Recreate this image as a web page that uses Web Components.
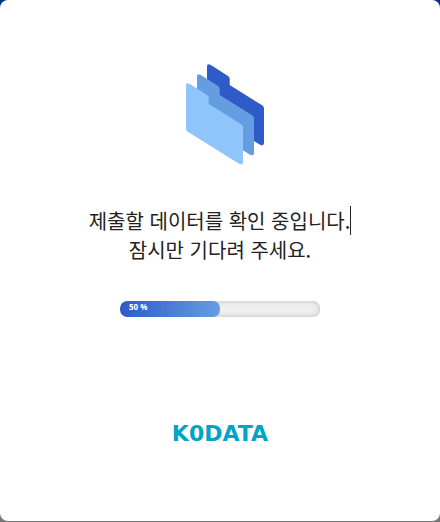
<!DOCTYPE html>
<html lang="ko">
<head>
<meta charset="utf-8">
<meta name="viewport" content="width=device-width">
<title>KODATA</title>
<style>
html, body { height: 100%; }
body {
  margin: 0;
  background: linear-gradient(#003080 50%, #777 50%);
  font-family: "Noto Sans CJK KR", "Noto Sans", sans-serif;
  color: #222;
}
</style>
</head>
<body>
<loading-card>
  <folder-stack slot="art"></folder-stack>
  <typed-message>제출할 데이터를 확인 중입니다.<span slot="next">잠시만 기다려 주세요.</span></typed-message>
  <progress-meter value="50"></progress-meter>
  <brand-mark slot="brand">K0DATA</brand-mark>
</loading-card>
<script>
const define = (name, html, setup) => {
  const template = document.createElement('template');
  template.innerHTML = html;
  customElements.define(name, class extends HTMLElement {
    constructor() {
      super();
      this.attachShadow({ mode: 'open' }).append(template.content.cloneNode(true));
    }
    connectedCallback() { if (setup) setup(this); }
  });
};

define('loading-card', `
<style>
:host { display: block; box-sizing: border-box; height: 100%; padding-bottom: 1px; }
main { box-sizing: border-box; min-height: 100%; display: flex; flex-direction: column; align-items: center;
  padding: 64px 16px 75px; background: #fff; border-radius: 8px; }
section { display: flex; flex-direction: column; align-items: center; gap: 37px; margin-top: 41px; }
footer { margin-top: auto; }
</style>
<main><slot name="art"></slot><section><slot></slot></section><footer><slot name="brand"></slot></footer></main>`);

define('folder-stack', `
<style>:host { display: block; padding-left: 12px; } svg { display: block; }</style>
<svg width="80" height="101" viewBox="0 0 80 101" aria-hidden="true">
  <defs><path id="f" d="M0 2.5Q0-1 3.5.8L21 12Q22.7 13.2 22.7 15V21L55.5 41.5Q57 42.5 57 44.5V78.5Q57 82.3 53.5 81L1.4 48.5Q0 47.5 0 45.5Z"/></defs>
  <use href="#f" x="21" fill="#2e5bc8"/>
  <use href="#f" x="11" y="10" fill="#659de2"/>
  <use href="#f" y="19" fill="#8fc5fb"/>
</svg>`);

define('typed-message', `
<style>
:host { display: block; text-align: center; font-size: 20px; line-height: 29px; }
p { margin: 0; }
.typed { display: inline-block; border-right: 1px solid #222; }
</style>
<p><span class="typed"><slot></slot></span></p><p><slot name="next"></slot></p>`);

define('progress-meter', `
<style>
:host { display: block; width: 200px; }
.track { height: 16px; border-radius: 7px; overflow: hidden; background: #eee; box-shadow: inset 0 0 5px #bbb; }
.fill { box-sizing: border-box; height: 100%; padding-left: 9px; border-radius: 7px;
  background: linear-gradient(90deg, #2e5bc8, #659de2); color: #fff;
  font: bold 8px/12px "Open Sans", sans-serif; }
</style>
<div class="track" role="progressbar" aria-label="진행률" aria-valuemin="0" aria-valuemax="100"><div class="fill"></div></div>`,
host => {
  const value = host.getAttribute('value');
  const fill = host.shadowRoot.querySelector('.fill');
  fill.style.width = value + '%';
  fill.textContent = value + ' %';
  host.shadowRoot.querySelector('.track').setAttribute('aria-valuenow', value);
});

define('brand-mark', `
<style>:host { display: block; color: #00a4c4; font: bold 22px/24px "DejaVu Sans", sans-serif; }</style>
<slot></slot>`);
</script>
</body>
</html>
